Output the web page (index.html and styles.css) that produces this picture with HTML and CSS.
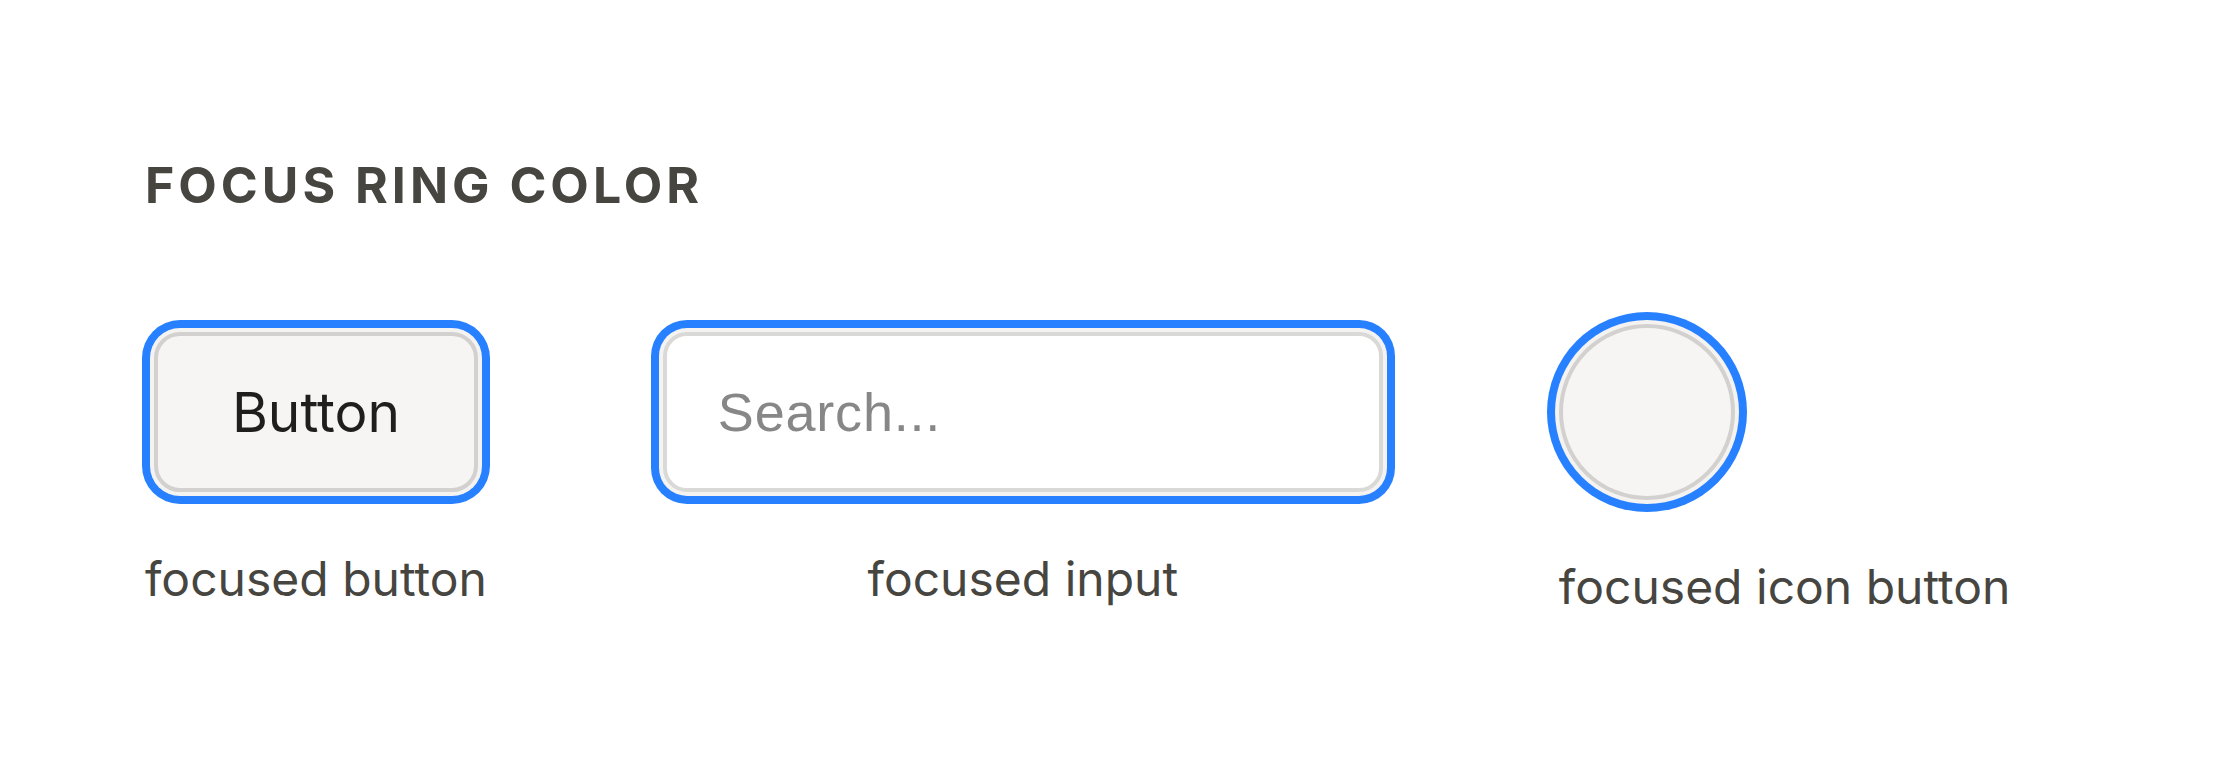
FILE: index.html
```html
<!DOCTYPE html>
<html lang="en">
<head>
<meta charset="utf-8">
<title>Focus ring color</title>
<link rel="stylesheet" href="styles.css">
</head>
<body>
<main class="page">
  <h2 class="section-title">Focus ring color</h2>
  <div class="demo-row">
    <div class="demo demo--center">
      <button class="btn is-focused" type="button">Button</button>
      <span class="demo-label">focused button</span>
    </div>
    <div class="demo demo--center">
      <input class="field is-focused" type="text" placeholder="Search...">
      <span class="demo-label">focused input</span>
    </div>
    <div class="demo demo--start">
      <button class="icon-btn is-focused" type="button" aria-label="Icon"></button>
      <span class="demo-label">focused icon button</span>
    </div>
  </div>
</main>
</body>
</html>
```

FILE: styles.css
```css
* {
  box-sizing: border-box;
}

html,
body {
  margin: 0;
  background: #ffffff;
}

body {
  font-family: Inter, "Noto Sans", sans-serif;
  color: #464540;
}

.page {
  padding: 155px 144px 0 145px;
}

.section-title {
  margin: 0;
  font-size: 50px;
  line-height: 60px;
  font-weight: 700;
  letter-spacing: 4px;
  text-transform: uppercase;
  color: #464540;
}

.demo-row {
  display: flex;
  align-items: center;
  gap: 176px;
  margin-top: 109px;
}

.demo {
  display: flex;
  flex-direction: column;
}

.demo--center {
  align-items: center;
}

.demo--start {
  align-items: flex-start;
}

.demo-label {
  margin-top: 51px;
  font-size: 48px;
  line-height: 72px;
  color: #464540;
  white-space: nowrap;
}

/* focus ring: 4px offset in a warm off-white, then the 8px blue ring */
.is-focused {
  outline: none;
  box-shadow: 0 0 0 4px #f4f3f1, 0 0 0 12px #2680ff;
}

.btn {
  width: 324px;
  height: 160px;
  padding: 0;
  border: 4px solid #d2d1cf;
  border-radius: 26px;
  background: #f6f5f3;
  font-family: Inter, "Noto Sans", sans-serif;
  font-size: 55px;
  color: #1f1e1c;
}

.field {
  width: 720px;
  height: 160px;
  padding: 0 46px 0 51px;
  border: 4px solid #d9d9d7;
  border-radius: 24px;
  background: #ffffff;
  font-family: "Liberation Sans", Arial, sans-serif;
  font-size: 54px;
  letter-spacing: 0.8px;
  color: #1f1e1c;
}

.field::placeholder {
  color: #878787;
  opacity: 1;
}

.icon-btn {
  width: 176px;
  height: 176px;
  padding: 0;
  border: 4px solid #d2d1cf;
  border-radius: 50%;
  background: #f6f5f3;
}
```
